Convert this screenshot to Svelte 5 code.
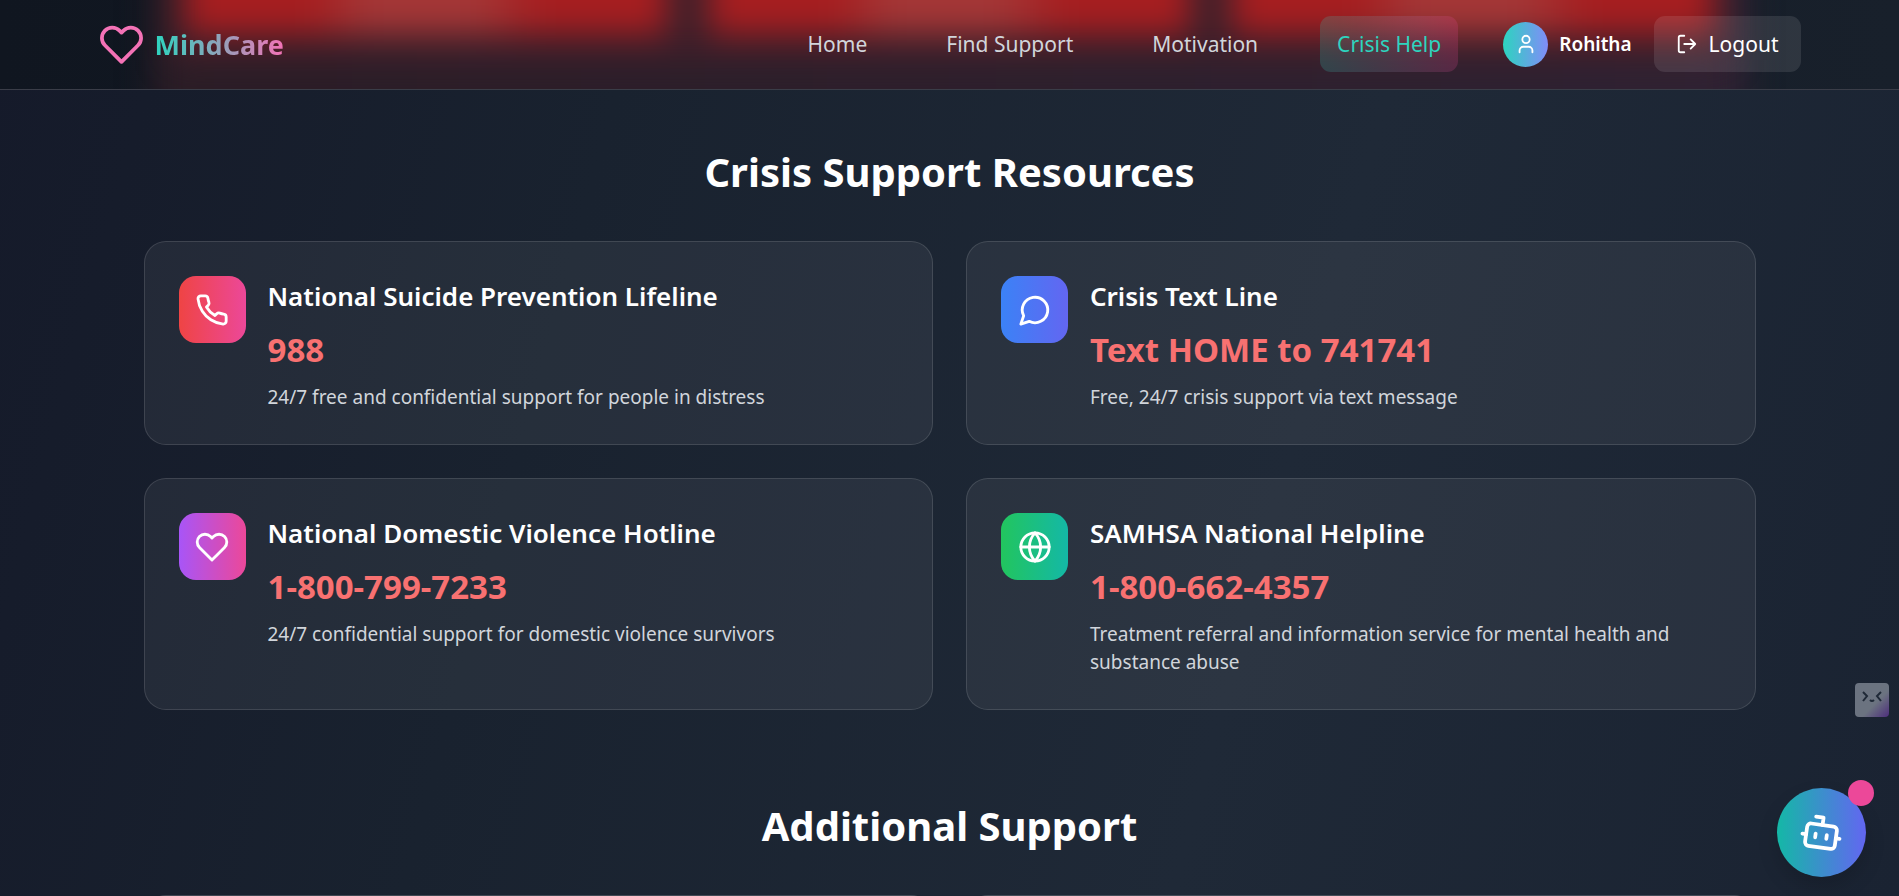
<script>
  const links = [
    { label: 'Home', href: '#home' },
    { label: 'Find Support', href: '#support' },
    { label: 'Motivation', href: '#motivation' },
    { label: 'Crisis Help', href: '#crisis', active: true }
  ];

  const resources = [
    {
      icon: 'phone',
      name: 'National Suicide Prevention Lifeline',
      contact: '988',
      text: '24/7 free and confidential support for people in distress'
    },
    {
      icon: 'message',
      name: 'Crisis Text Line',
      contact: 'Text HOME to 741741',
      text: 'Free, 24/7 crisis support via text message'
    },
    {
      icon: 'heart',
      name: 'National Domestic Violence Hotline',
      contact: '1-800-799-7233',
      text: '24/7 confidential support for domestic violence survivors'
    },
    {
      icon: 'globe',
      name: 'SAMHSA National Helpline',
      contact: '1-800-662-4357',
      text: 'Treatment referral and information service for mental health and substance abuse'
    }
  ];
</script>

{#snippet icon(name)}
  <svg class="icon" viewBox="0 0 24 24" aria-hidden="true">
    {#if name === 'heart'}
      <path d="M20.84 4.61a5.5 5.5 0 0 0-7.78 0L12 5.67l-1.06-1.06a5.5 5.5 0 0 0-7.78 7.78l1.06 1.06L12 21.23l7.78-7.78 1.06-1.06a5.5 5.5 0 0 0 0-7.78z" />
    {:else if name === 'phone'}
      <path d="M22 16.92v3a2 2 0 0 1-2.18 2 19.79 19.79 0 0 1-8.63-3.07 19.5 19.5 0 0 1-6-6 19.79 19.79 0 0 1-3.07-8.67A2 2 0 0 1 4.11 2h3a2 2 0 0 1 2 1.72 12.84 12.84 0 0 0 .7 2.81 2 2 0 0 1-.45 2.11L8.09 9.91a16 16 0 0 0 6 6l1.27-1.27a2 2 0 0 1 2.11-.45 12.84 12.84 0 0 0 2.81.7A2 2 0 0 1 22 16.92z" />
    {:else if name === 'message'}
      <path d="M7.9 20A9 9 0 1 0 4 16.1L2 22Z" />
    {:else if name === 'globe'}
      <circle cx="12" cy="12" r="10" />
      <path d="M2 12h20M12 2a15.3 15.3 0 0 1 4 10 15.3 15.3 0 0 1-4 10 15.3 15.3 0 0 1-4-10 15.3 15.3 0 0 1 4-10z" />
    {:else if name === 'user'}
      <path d="M19 21v-2a4 4 0 0 0-4-4H9a4 4 0 0 0-4 4v2" />
      <circle cx="12" cy="7" r="4" />
    {:else if name === 'logout'}
      <path d="M9 21H5a2 2 0 0 1-2-2V5a2 2 0 0 1 2-2h4M16 17l5-5-5-5M21 12H9" />
    {:else if name === 'bot'}
      <path d="M12 8V4H8M2 14h2M20 14h2M15 13v2M9 13v2" />
      <rect x="4" y="8" width="16" height="12" rx="2" />
    {/if}
  </svg>
{/snippet}

<div class="page">
  <header>
    <div class="haze" aria-hidden="true"></div>
    <div class="glow" aria-hidden="true"><i></i><i></i><i></i></div>
    <div class="bar">
      <a class="brand" href="#home">{@render icon('heart')}<span>MindCare</span></a>
      <div class="right">
        <nav>
          {#each links as link}
            <a href={link.href} class:active={link.active}>{link.label}</a>
          {/each}
        </nav>
        <div class="account">
          <div class="user">
            <span class="avatar">{@render icon('user')}</span>
            <span class="username">Rohitha</span>
          </div>
          <button class="logout" type="button">{@render icon('logout')}<span>Logout</span></button>
        </div>
      </div>
    </div>
  </header>

  <main>
    <section>
      <h2>Crisis Support Resources</h2>
      <div class="grid">
        {#each resources as item}
          <article class="card">
            <span class="tile {item.icon}">{@render icon(item.icon)}</span>
            <div class="info">
              <h3>{item.name}</h3>
              <p class="contact">{item.contact}</p>
              <p class="text">{item.text}</p>
            </div>
          </article>
        {/each}
      </div>
    </section>
    <section>
      <h2>Additional Support</h2>
      <div class="grid">
        <article class="card empty"></article>
        <article class="card empty"></article>
      </div>
    </section>
  </main>

  <button class="helper" type="button" aria-label="Assistant">
    <svg viewBox="0 0 34 34" aria-hidden="true">
      <path d="M8 9l4 4-4 5M26 9l-4 4 4 5M15 17q2 2 4 0" />
    </svg>
  </button>
  <button class="chat" type="button" aria-label="Open chat">
    {@render icon('bot')}
    <span class="dot"></span>
  </button>
</div>

<style>
  :global(body) {
    margin: 0;
    background: #1a2332;
  }
  .page {
    box-sizing: border-box;
    height: 100vh;
    overflow: hidden;
    color: #fff;
    font-family: 'Noto Sans', 'Open Sans', sans-serif;
    background: linear-gradient(105deg, #151a2a 0%, #161c2b 8%, #19222f 30%, #1f2937 66%, #1a2332 100%);
  }
  .icon {
    display: block;
    width: 22px;
    height: 22px;
    fill: none;
    stroke: currentColor;
    stroke-width: 2;
    stroke-linecap: round;
    stroke-linejoin: round;
  }
  header {
    position: relative;
    overflow: hidden;
    background: linear-gradient(90deg, #101620, #18202b);
    border-bottom: 1px solid #3a3d48;
  }
  .haze,
  .glow {
    position: absolute;
    filter: blur(16px);
  }
  .haze {
    inset: -40px 8%;
    background: linear-gradient(90deg, #2b1d26, #2f2233);
  }
  .glow {
    inset: -60px 9% auto;
    box-sizing: border-box;
    height: 120px;
    padding: 0 14px;
    display: grid;
    grid-template-columns: repeat(3, 1fr);
    gap: 42px;
    background: #3e1f2a;
  }
  .glow i {
    height: 94px;
    background: linear-gradient(90deg, #a61e20 26%, #a43636 38%, #a43636 60%, #a61e20 74%);
  }
  .bar {
    position: relative;
    box-sizing: border-box;
    max-width: 1792px;
    margin: 0 auto;
    padding: 16px 45px 17px;
    display: flex;
    align-items: center;
    justify-content: space-between;
  }
  a {
    color: inherit;
    text-decoration: none;
  }
  .brand {
    display: flex;
    align-items: center;
    gap: 11px;
    font-size: 27px;
    font-weight: 700;
  }
  .brand .icon {
    width: 45px;
    height: 45px;
    color: #f472b6;
  }
  .brand span {
    color: transparent;
    background: linear-gradient(90deg, #2dd4bf, #f472b6);
    background-clip: text;
  }
  .right,
  nav {
    display: flex;
    align-items: center;
    gap: 45px;
  }
  nav a {
    padding: 0 17px;
    border-radius: 11px;
    color: #d1d5db;
    font-size: 21px;
    line-height: 56px;
    white-space: nowrap;
  }
  nav a.active {
    color: #2dd4bf;
    background: linear-gradient(90deg, rgba(45, 212, 191, 0.2), rgba(236, 72, 153, 0.2));
  }
  .account {
    display: flex;
    align-items: center;
    gap: 22px;
  }
  .user {
    display: flex;
    align-items: center;
    gap: 11px;
    font-size: 19px;
    font-weight: 600;
  }
  .avatar {
    display: grid;
    place-items: center;
    width: 45px;
    height: 45px;
    border-radius: 50%;
    background: linear-gradient(90deg, #2dd4bf, #818cf8);
  }
  .logout {
    display: flex;
    align-items: center;
    gap: 11px;
    padding: 0 22px;
    border: 0;
    border-radius: 11px;
    color: inherit;
    background: rgba(255, 255, 255, 0.1);
    font: inherit;
    font-size: 21px;
    line-height: 56px;
  }
  main {
    max-width: 1612px;
    margin: 0 auto;
    padding: 56px 45px 0;
    display: grid;
    gap: 90px;
  }
  h2 {
    margin: 0 0 43px;
    font-size: 40px;
    font-weight: 700;
    line-height: 52px;
    text-align: center;
  }
  .grid {
    display: grid;
    grid-template-columns: repeat(2, 1fr);
    gap: 33px;
  }
  .card {
    display: flex;
    align-items: flex-start;
    gap: 22px;
    padding: 34px 34px 33px;
    border: 1px solid rgba(255, 255, 255, 0.12);
    border-radius: 22px;
    background: rgba(255, 255, 255, 0.06);
  }
  .empty {
    height: 140px;
  }
  .tile {
    flex: none;
    display: grid;
    place-items: center;
    width: 67px;
    height: 67px;
    border-radius: 17px;
  }
  .tile .icon {
    width: 34px;
    height: 34px;
  }
  .phone {
    background: linear-gradient(90deg, #ef4444, #ec4899);
  }
  .message {
    background: linear-gradient(90deg, #3b82f6, #6366f1);
  }
  .heart {
    background: linear-gradient(90deg, #a855f7, #ec4899);
  }
  .globe {
    background: linear-gradient(90deg, #22c55e, #14b8a6);
  }
  .info {
    padding-top: 1px;
  }
  h3,
  p {
    margin: 0;
  }
  h3 {
    margin-bottom: 11px;
    font-size: 26px;
    font-weight: 600;
    line-height: 39px;
  }
  .contact {
    margin-bottom: 11px;
    color: #f87171;
    font-size: 33px;
    font-weight: 700;
    line-height: 45px;
  }
  .text {
    color: #d1d5db;
    font-size: 19px;
    line-height: 28px;
  }
  .chat {
    position: fixed;
    right: 33px;
    bottom: 19px;
    display: grid;
    place-items: center;
    width: 89px;
    height: 89px;
    padding: 0;
    border: 0;
    border-radius: 50%;
    color: #fff;
    background: linear-gradient(90deg, #14b8a6, #6366f1);
    box-shadow: 0 10px 20px rgba(0, 0, 0, 0.15);
  }
  .chat .icon {
    width: 45px;
    height: 45px;
    transform: rotate(8deg);
  }
  .dot {
    position: absolute;
    top: -8px;
    right: -8px;
    width: 26px;
    height: 26px;
    border-radius: 50%;
    background: #ec4899;
  }
  .helper {
    position: fixed;
    right: 10px;
    bottom: 179px;
    width: 34px;
    height: 34px;
    padding: 0;
    border: 0;
    border-radius: 4px;
    background: linear-gradient(135deg, #6b7380 60%, #4d2e7c);
  }
  .helper svg {
    display: block;
    fill: none;
    stroke: #1f2937;
    stroke-width: 2;
  }
</style>
